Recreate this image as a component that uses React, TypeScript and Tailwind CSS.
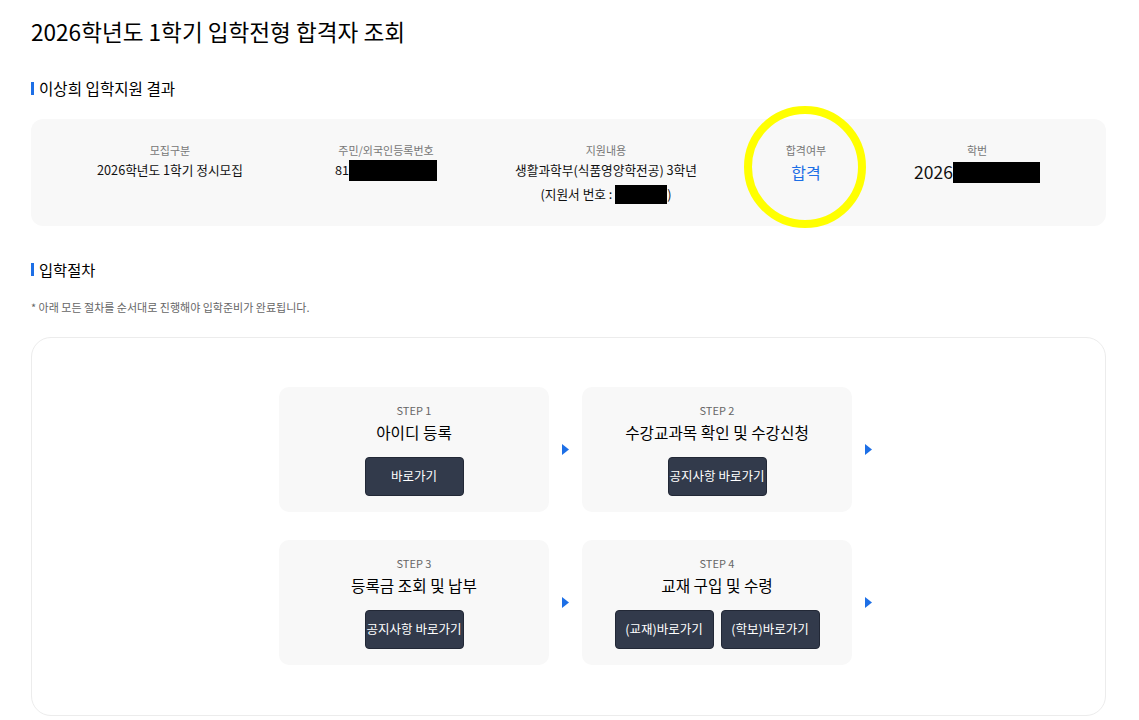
import React from "react";

const font = { fontFamily: '"Noto Sans CJK KR", "Noto Sans", sans-serif' };

function Arrow() {
  return (
    <div className="flex items-center justify-center">
      <svg width="7" height="11" viewBox="0 0 7 11">
        <path d="M0 0 L7 5.5 L0 11 Z" fill="#1d6fe6" />
      </svg>
    </div>
  );
}

function Btn({ children }: { children: React.ReactNode }) {
  return (
    <div className="w-[99px] h-[39px] rounded-[4px] bg-[#323a4b] border border-[#222836] flex items-center justify-center text-white text-[12.5px] whitespace-nowrap">
      {children}
    </div>
  );
}

function Card({ step, title, children }: { step: string; title: string; children: React.ReactNode }) {
  return (
    <div className="h-[125px] rounded-[10px] bg-[#f8f8f8] flex flex-col items-center pt-[15px]">
      <div className="text-[11px] leading-[16px] text-[#666]">{step}</div>
      <div className="mt-[4px] text-[15.7px] leading-[22px] text-black">{title}</div>
      <div className="mt-[13px] flex gap-[7px]">{children}</div>
    </div>
  );
}

function Heading({ size, children }: { size: string; children: React.ReactNode }) {
  return (
    <div className="flex items-center gap-[5px] h-[20px]">
      <div className="w-[3px] h-[13px] bg-[#1d6fe6]" />
      <div className={`${size} leading-[20px] text-black`}>{children}</div>
    </div>
  );
}

export default function App() {
  return (
    <div className="relative w-[1139px] h-[720px] bg-white overflow-hidden" style={font}>
      <div className="px-[31px] pt-[17px]">
        <h1 className="text-[22.6px] leading-[30px] text-black">2026학년도 1학기 입학전형 합격자 조회</h1>
        <div className="mt-[31px]">
          <Heading size="text-[15.6px]">이상희 입학지원 결과</Heading>
        </div>
        <div className="mt-[21px] w-[1075px] h-[107px] rounded-[12px] bg-[#f8f8f8] pl-[31px] pt-[23px] grid grid-cols-[216px_216px_224px_176px_166px] text-center">
          <div>
            <div className="text-[11px] leading-[16px] text-[#777]">모집구분</div>
            <div className="text-[12.7px] leading-[24px] text-[#111]">2026학년도 1학기 정시모집</div>
          </div>
          <div>
            <div className="text-[11px] leading-[16px] text-[#777]">주민/외국인등록번호</div>
            <div className="text-[12.7px] leading-[24px] text-[#111] flex justify-center items-center">
              <span>81</span>
              <span className="inline-block w-[88px] h-[21px] bg-black" />
            </div>
          </div>
          <div>
            <div className="text-[11px] leading-[16px] text-[#777]">지원내용</div>
            <div className="text-[12.7px] leading-[24px] text-[#111]">생활과학부(식품영양학전공) 3학년</div>
            <div className="text-[12.7px] leading-[24px] text-[#111] flex justify-center items-center">
              <span>(지원서 번호 :&nbsp;</span>
              <span className="inline-block w-[52px] h-[19px] bg-black" />
              <span>)</span>
            </div>
          </div>
          <div>
            <div className="text-[11px] leading-[16px] text-[#777]">합격여부</div>
            <div className="text-[16px] leading-[28px] text-[#1d6fe6]">합격</div>
          </div>
          <div>
            <div className="text-[11px] leading-[16px] text-[#777]">학번</div>
            <div className="text-[17.5px] leading-[28px] text-[#111] flex justify-center items-center">
              <span>2026</span>
              <span className="inline-block w-[87px] h-[21px] bg-black" />
            </div>
          </div>
        </div>
        <div className="mt-[33px]">
          <Heading size="text-[15.3px]">입학절차</Heading>
        </div>
        <div className="mt-[20px] text-[11px] leading-[16px] text-[#666]">* 아래 모든 절차를 순서대로 진행해야 입학준비가 완료됩니다.</div>
        <div className="mt-[22px] w-[1075px] h-[379px] rounded-[20px] border border-[#ececec] pt-[49px] pl-[247px]">
          <div className="grid grid-cols-[270px_33px_270px_33px] gap-y-[28px]">
            <Card step="STEP 1" title="아이디 등록">
              <Btn>바로가기</Btn>
            </Card>
            <Arrow />
            <Card step="STEP 2" title="수강교과목 확인 및 수강신청">
              <Btn>공지사항 바로가기</Btn>
            </Card>
            <Arrow />
            <Card step="STEP 3" title="등록금 조회 및 납부">
              <Btn>공지사항 바로가기</Btn>
            </Card>
            <Arrow />
            <Card step="STEP 4" title="교재 구입 및 수령">
              <Btn>(교재)바로가기</Btn>
              <Btn>(학보)바로가기</Btn>
            </Card>
            <Arrow />
          </div>
        </div>
      </div>
      <svg className="absolute left-[742px] top-[104px]" width="126" height="126" viewBox="0 0 126 126">
        <circle cx="63" cy="63" r="57" fill="none" stroke="#ffff00" strokeWidth="8" />
      </svg>
    </div>
  );
}
